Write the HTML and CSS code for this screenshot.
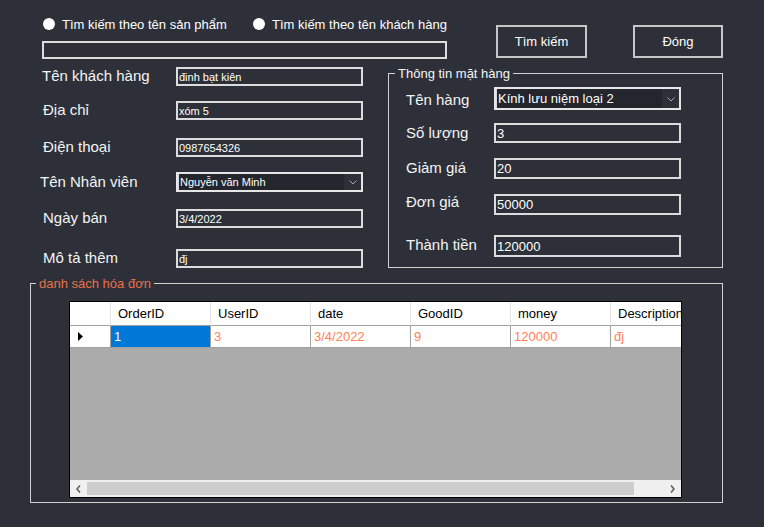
FILE: index.html
```html
<!DOCTYPE html>
<html lang="vi">
<head>
<meta charset="utf-8">
<title>Hóa đơn</title>
<link rel="stylesheet" href="styles.css">
</head>
<body>
<div class="app">
  <div class="top">
    <div class="search-col">
      <div class="radios">
        <div class="radio first"><span class="dot"></span>Tìm kiếm theo tên sản phẩm</div>
        <div class="radio"><span class="dot"></span>Tìm kiếm theo tên khách hàng</div>
      </div>
      <div class="tb search"></div>
    </div>
    <div class="buttons">
      <div class="btn">Tìm kiếm</div>
      <div class="btn b2">Đóng</div>
    </div>
  </div>

  <div class="middle">
    <div class="form-left">
      <div class="row"><span class="lbl">Tên khách hàng</span><div class="tb">đinh bạt kiên</div></div>
      <div class="row"><span class="lbl">Địa chỉ</span><div class="tb">xóm 5</div></div>
      <div class="row"><span class="lbl">Điện thoại</span><div class="tb">0987654326</div></div>
      <div class="row"><span class="lbl lbl-nv">Tên Nhân viên</span>
        <div class="combo"><span class="sel">Nguyễn văn Minh</span><span class="arrow"><svg width="8" height="5" viewBox="0 0 8 5"><path d="M0.5 0.5 L4 4 L7.5 0.5" fill="none" stroke="#a6a6a6" stroke-width="1"/></svg></span></div>
      </div>
      <div class="row"><span class="lbl">Ngày bán</span><div class="tb">3/4/2022</div></div>
      <div class="row"><span class="lbl">Mô tả thêm</span><div class="tb">đj</div></div>
    </div>

    <fieldset class="group goods">
      <legend>Thông tin mặt hàng</legend>
      <div class="goods-body">
        <div class="row"><span class="lbl rl">Tên hàng</span>
          <div class="combo big"><span class="sel">Kính lưu niệm loại 2</span><span class="arrow"><svg width="8" height="5" viewBox="0 0 8 5"><path d="M0.5 0.5 L4 4 L7.5 0.5" fill="none" stroke="#a6a6a6" stroke-width="1"/></svg></span></div>
        </div>
        <div class="row"><span class="lbl rl">Số lượng</span><div class="tb tb-r">3</div></div>
        <div class="row"><span class="lbl rl">Giảm giá</span><div class="tb tb-r">20</div></div>
        <div class="row"><span class="lbl rl">Đơn giá</span><div class="tb tb-r">50000</div></div>
        <div class="row"><span class="lbl rl">Thành tiền</span><div class="tb tb-r">120000</div></div>
      </div>
    </fieldset>
  </div>

  <fieldset class="group invoices">
    <legend>danh sách hóa đơn</legend>
    <div class="grid">
      <div class="grow head">
        <div class="cell rh"></div>
        <div class="cell">OrderID</div>
        <div class="cell">UserID</div>
        <div class="cell">date</div>
        <div class="cell">GoodID</div>
        <div class="cell">money</div>
        <div class="cell">Description</div>
      </div>
      <div class="grow data">
        <div class="cell rh"><svg width="5" height="9" viewBox="0 0 5 9"><polygon points="0,0 5,4.5 0,9" fill="#000"/></svg></div>
        <div class="cell selected">1</div>
        <div class="cell">3</div>
        <div class="cell">3/4/2022</div>
        <div class="cell">9</div>
        <div class="cell">120000</div>
        <div class="cell">đj</div>
      </div>
      <div class="empty"></div>
      <div class="hscroll">
        <span class="sarrow"><svg width="5" height="8" viewBox="0 0 5 8"><path d="M4 0.5 L1 4 L4 7.5" fill="none" stroke="#606060" stroke-width="1.6"/></svg></span>
        <span class="thumb"></span>
        <span class="track"></span>
        <span class="sarrow"><svg width="5" height="8" viewBox="0 0 5 8"><path d="M1 0.5 L4 4 L1 7.5" fill="none" stroke="#606060" stroke-width="1.6"/></svg></span>
      </div>
    </div>
  </fieldset>
</div>
</body>
</html>
```

FILE: styles.css
```css
* { box-sizing: border-box; }

body {
  margin: 0;
  width: 764px;
  height: 527px;
  overflow: hidden;
  background: #2d3038;
  color: #ffffff;
  font-family: "Liberation Sans", Arial, sans-serif;
}

.app {
  width: 764px;
  height: 527px;
}

/* ---------- top ---------- */
.top {
  display: flex;
  align-items: flex-start;
  padding: 17px 0 0 42px;
}

.search-col {
  width: 405px;
}

.radios {
  display: flex;
  align-items: center;
  height: 14px;
  font-size: 13px;
}

.radio {
  display: flex;
  align-items: center;
  gap: 7px;
  white-space: nowrap;
}

.radio.first {
  width: 210px;
  margin-left: 1px;
}

.dot {
  width: 12px;
  height: 12px;
  border-radius: 50%;
  background: #ffffff;
  flex-shrink: 0;
}

.tb {
  width: 187px;
  height: 19px;
  border: 2px solid #dcdcdc;
  display: flex;
  align-items: center;
  padding-left: 1px;
  font-size: 11px;
  color: #ffffff;
  white-space: nowrap;
}

.search {
  width: 405px;
  height: 18px;
  margin-top: 10px;
}

.buttons {
  display: flex;
  gap: 46px;
  margin: 8px 0 0 49px;
}

.btn {
  width: 91px;
  height: 33px;
  border: 2px solid #c6c6c6;
  display: flex;
  align-items: center;
  justify-content: center;
  font-size: 13px;
}

.btn.b2 {
  width: 90px;
}

/* ---------- middle ---------- */
.middle {
  display: flex;
  align-items: flex-start;
  margin-top: 8px;
}

.form-left {
  margin-left: 42px;
  width: 321px;
}

.row {
  display: flex;
  align-items: center;
}

.lbl {
  width: 134px;
  font-size: 15px;
  line-height: 17px;
  padding-bottom: 2px;
  color: #f4f4f4;
  white-space: nowrap;
}

.lbl-nv {
  margin-left: -2px;
  width: 136px;
}

.form-left .row:nth-child(2) { margin-top: 15px; }
.form-left .row:nth-child(3) { margin-top: 18px; }
.form-left .row:nth-child(4) { margin-top: 15px; }
.form-left .row:nth-child(5) { margin-top: 17px; }
.form-left .row:nth-child(6) { margin-top: 21px; }

.form-left .row:nth-child(2) .lbl,
.form-left .row:nth-child(3) .lbl,
.form-left .row:nth-child(5) .lbl,
.form-left .row:nth-child(6) .lbl {
  padding-left: 1px;
}

.combo {
  display: flex;
  width: 187px;
  height: 20px;
  border: 2px solid #e6e6e6;
  font-size: 11px;
}

.combo .sel {
  flex: 1;
  display: flex;
  align-items: center;
  background: #23262d;
  border-left: 1px solid #d8d8d8;
  padding-left: 1px;
  white-space: nowrap;
}

.combo .arrow {
  width: 17px;
  display: flex;
  align-items: center;
  justify-content: center;
  padding-top: 1px;
}

.combo.big {
  height: 23px;
  font-size: 13px;
}

/* ---------- group boxes ---------- */
.group {
  margin: 0;
  padding: 0;
  border: 1px solid #d2d2d2;
  min-width: 0;
}

.group legend {
  font-size: 13px;
  line-height: 13px;
  padding: 0 3px;
}

.goods {
  margin-left: 25px;
  width: 335px;
}

.goods legend {
  margin-left: 6px;
  color: #f4f4f4;
}

.goods-body {
  padding: 7px 0 10px 17px;
}

.goods-body .row:first-child .lbl { padding-bottom: 0; padding-top: 2px; }

.rl {
  width: 88px;
}

.tb-r {
  font-size: 13px;
  height: 20px;
}

.goods-body .row:nth-child(2) { margin-top: 13px; }
.goods-body .row:nth-child(3) { margin-top: 15px; }
.goods-body .row:nth-child(3) .tb { height: 21px; }
.goods-body .row:nth-child(4) { margin-top: 14px; }
.goods-body .row:nth-child(4) .tb { height: 21px; }
.goods-body .row:nth-child(4) .lbl { padding-bottom: 6px; }
.goods-body .row:nth-child(5) { margin-top: 19px; }
.goods-body .row:nth-child(5) .tb { height: 22px; }
.goods-body .row:nth-child(5) .lbl { padding-bottom: 3px; }

.invoices {
  margin: 9px 0 0 30px;
  width: 693px;
  padding: 11px 0 4px 0;
}

.invoices legend {
  margin-left: 5px;
  color: #e8704a;
}

/* ---------- data grid ---------- */
.grid {
  width: 613px;
  height: 197px;
  margin-left: 38px;
  border: 1px solid #000000;
  background: #ababab;
  display: flex;
  flex-direction: column;
  overflow: hidden;
  font-size: 13px;
}

.grow {
  display: flex;
  flex-shrink: 0;
  background: #ffffff;
}

.grow .cell {
  width: 100px;
  flex-shrink: 0;
  display: flex;
  align-items: center;
  white-space: nowrap;
}

.grow .cell.rh {
  width: 41px;
}

.head {
  height: 24px;
}

.head .cell {
  border-right: 1px solid #e4e4e4;
  border-bottom: 1px solid #a0a0a0;
  padding-left: 7px;
  color: #000000;
}

.data {
  height: 22px;
}

.data .cell {
  border-right: 1px solid #a0a0a0;
  border-bottom: 1px solid #a0a0a0;
  padding-left: 3px;
  color: #ff8257;
}

.data .cell.rh {
  padding-left: 8px;
}

.data .cell.selected {
  background: #0078d7;
  color: #ffffff;
}

.empty {
  flex: 1;
  background: #ababab;
}

.hscroll {
  height: 17px;
  flex-shrink: 0;
  display: flex;
  align-items: stretch;
  background: #f0f0f0;
}

.sarrow {
  width: 17px;
  display: flex;
  align-items: center;
  justify-content: center;
}

.thumb {
  width: 547px;
  margin: 2px 0;
  background: #cdcdcd;
}

.track {
  flex: 1;
}
```
